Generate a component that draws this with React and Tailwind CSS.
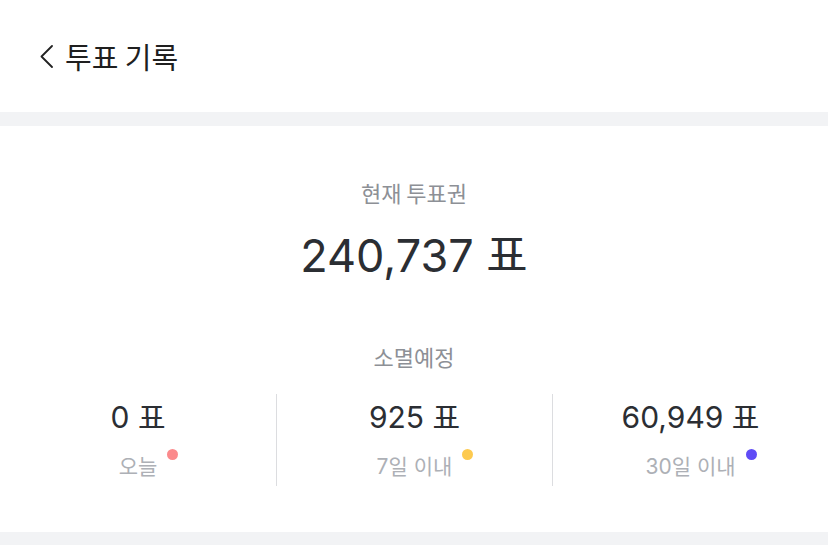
export default function App() {
  const cols = [
    { n: "0", l: "오늘", c: "bg-[#fb8a8c]" },
    { n: "925", l: "7일 이내", c: "bg-[#fdca4f]" },
    { n: "60,949", l: "30일 이내", c: "bg-[#604cf6]" },
  ];
  return (
    <div className="w-[828px] h-[545px] bg-[#f2f3f5] flex flex-col font-['Inter','Noto_Sans_CJK_KR',sans-serif]">
      <div className="h-[112px] bg-white flex items-center pl-[39px] shrink-0">
        <svg width="15" height="24" viewBox="0 0 15 24" fill="none" className="mr-[11px]">
          <path d="M13 2 L2.5 12.5 L13 23" stroke="#222" strokeWidth="1.8" strokeLinecap="round" strokeLinejoin="round" />
        </svg>
        <span className="text-[29px] leading-[34px] text-[#1f1f1f] font-['Noto_Sans_CJK_KR',sans-serif]">투표 기록</span>
      </div>
      <div className="mt-[14px] h-[406px] bg-white flex flex-col items-center shrink-0">
        <div className="mt-[52px] text-[22px] leading-[28px] text-[#8d9096] font-['Noto_Sans_CJK_KR',sans-serif]">현재 투표권</div>
        <div className="mt-[21px] text-[45px] leading-[52px] text-[#2b2e33]">
          240,737 <span className="font-['Noto_Sans_CJK_KR',sans-serif]">표</span>
        </div>
        <div className="mt-[60px] text-[22px] leading-[28px] text-[#8d9096] font-['Noto_Sans_CJK_KR',sans-serif]">소멸예정</div>
        <div className="mt-[24px] w-full grid grid-cols-3">
          {cols.map((c, i) => (
            <div key={i} className={`h-[92px] flex flex-col items-center pt-[3px] ${i > 0 ? "border-l border-[#dcdde0]" : ""}`}>
              <div className="text-[30px] leading-[36px] text-[#2b2e33]">
                {c.n} <span className="font-['Noto_Sans_CJK_KR',sans-serif]">표</span>
              </div>
              <div className="relative mt-[18px] text-[21px] leading-[28px] text-[#adb0b6]">
                {c.l}
                <span className={`absolute -right-[21px] top-[-4px] w-[11px] h-[11px] rounded-full ${c.c}`} />
              </div>
            </div>
          ))}
        </div>
      </div>
    </div>
  );
}
